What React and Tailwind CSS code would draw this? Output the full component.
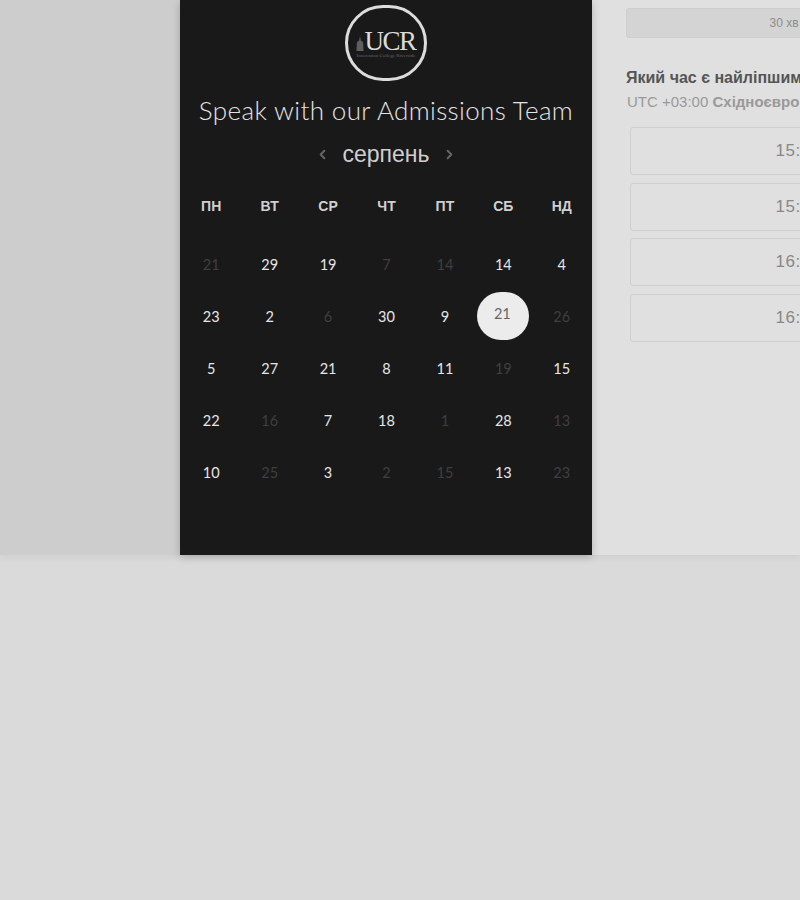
import { ChevronLeft, ChevronRight } from 'lucide-react'

const weekdays = ['ПН', 'ВТ', 'СР', 'ЧТ', 'ПТ', 'СБ', 'НД']

// d = dim, s = selected
const days = [
  { n: 21, d: true }, { n: 29 }, { n: 19 }, { n: 7, d: true }, { n: 14, d: true }, { n: 14 }, { n: 4 },
  { n: 23 }, { n: 2 }, { n: 6, d: true }, { n: 30 }, { n: 9 }, { n: 21, s: true }, { n: 26, d: true },
  { n: 5 }, { n: 27 }, { n: 21 }, { n: 8 }, { n: 11 }, { n: 19, d: true }, { n: 15 },
  { n: 22 }, { n: 16, d: true }, { n: 7 }, { n: 18 }, { n: 1, d: true }, { n: 28 }, { n: 13, d: true },
  { n: 10 }, { n: 25, d: true }, { n: 3 }, { n: 2, d: true }, { n: 15, d: true }, { n: 13 }, { n: 23, d: true },
]

const times = ['15:00', '15:30', '16:00', '16:30']

function Logo() {
  return (
    <div className="w-[82px] h-[76px] rounded-full border-[3px] border-[#dcdcdc] flex flex-col items-center justify-center">
      <div className="flex items-end h-[24px] mt-[1px]">
        <svg width="8" height="17" viewBox="0 0 9 17" className="mb-[1px]">
          <path d="M4.5 0 L5.5 5 L8 7 L8.5 17 L0.5 17 L1 7 L3.5 5 Z" fill="#5e5e5e" />
        </svg>
        <span className="font-['Liberation_Serif',serif] text-[27px] leading-[24px] tracking-[-1.5px] text-[#dcdcdc]">UCR</span>
      </div>
      <span className="font-['Liberation_Serif',serif] text-[5px] leading-[5px] text-[#666] whitespace-nowrap">Innovation College Riverside</span>
    </div>
  )
}

export default function App() {
  return (
    <div className="w-[800px] h-[900px] overflow-hidden bg-[#dadada] font-['Liberation_Sans',sans-serif]">
      <div className="relative flex h-[555px] bg-[#cdcdcd] shadow-[0_3px_6px_rgba(0,0,0,0.05)]">
        <div className="w-[180px] shrink-0" />
        <div className="w-[412px] shrink-0 bg-[#191919] flex flex-col items-center pt-[5px] shadow-[0_2px_8px_rgba(0,0,0,0.2)] z-10">
          <Logo />
          <h1 className="mt-[13px] font-['Lato',sans-serif] font-light text-[26px] leading-[32px] tracking-[0.37px] text-[#e4e4e4] whitespace-nowrap">Speak with our Admissions Team</h1>
          <div className="mt-[13px] flex items-center gap-[12px] text-[#666]">
            <ChevronLeft size={15} strokeWidth={3} />
            <span className="text-[23px] leading-[30px] text-[#cfcfcf]">серпень</span>
            <ChevronRight size={15} strokeWidth={3} />
          </div>
          <div className="mt-[27px] w-full pl-[2px] pr-[1px] grid grid-cols-7">
            {weekdays.map(w => (
              <div key={w} className="text-center text-[14px] leading-[20px] font-bold text-[#d0d0d0]">{w}</div>
            ))}
          </div>
          <div className="mt-[23px] w-full pl-[2px] pr-[1px] grid grid-cols-7 auto-rows-[52px] font-['Lato',sans-serif] text-[14.5px]">
            {days.map((day, i) => (
              <div key={i} className="flex items-center justify-center">
                {day.s ? (
                  <span className="w-[52px] h-[48px] -mt-[2px] rounded-full bg-[#ececec] text-[#666] flex items-center justify-center pb-[4px] pr-[2px]">{day.n}</span>
                ) : (
                  <span className={day.d ? 'text-[#3f3f3f]' : 'text-[#e6e6e6]'}>{day.n}</span>
                )}
              </div>
            ))}
          </div>
        </div>
        <div className="flex-1 bg-[#e0e0e0] overflow-hidden pl-[34px] pt-[8px]">
          <div className="w-[316px] h-[30px] rounded-[3px] bg-[#d4d4d4] border border-[#cecece] flex items-center justify-center text-[12px] text-[#8c8c8c]">30 хв</div>
          <div className="mt-[30px] w-[400px] text-[16px] leading-[20px] font-bold text-[#555] whitespace-nowrap">Який час є найліпшим для вас?</div>
          <div className="mt-[4px] ml-[1px] w-[400px] text-[15px] leading-[20px] text-[#999] whitespace-nowrap">UTC +03:00 <span className="font-bold">Східноєвропейський час</span></div>
          <div className="mt-[15px] ml-[4px] w-[336px] flex flex-col gap-[7.5px]">
            {times.map(t => (
              <div key={t} className="h-[48px] rounded-[3px] border border-[#cfcfcf] flex items-center justify-center text-[17px] tracking-[0.5px] text-[#888]">{t}</div>
            ))}
          </div>
        </div>
      </div>
    </div>
  )
}
